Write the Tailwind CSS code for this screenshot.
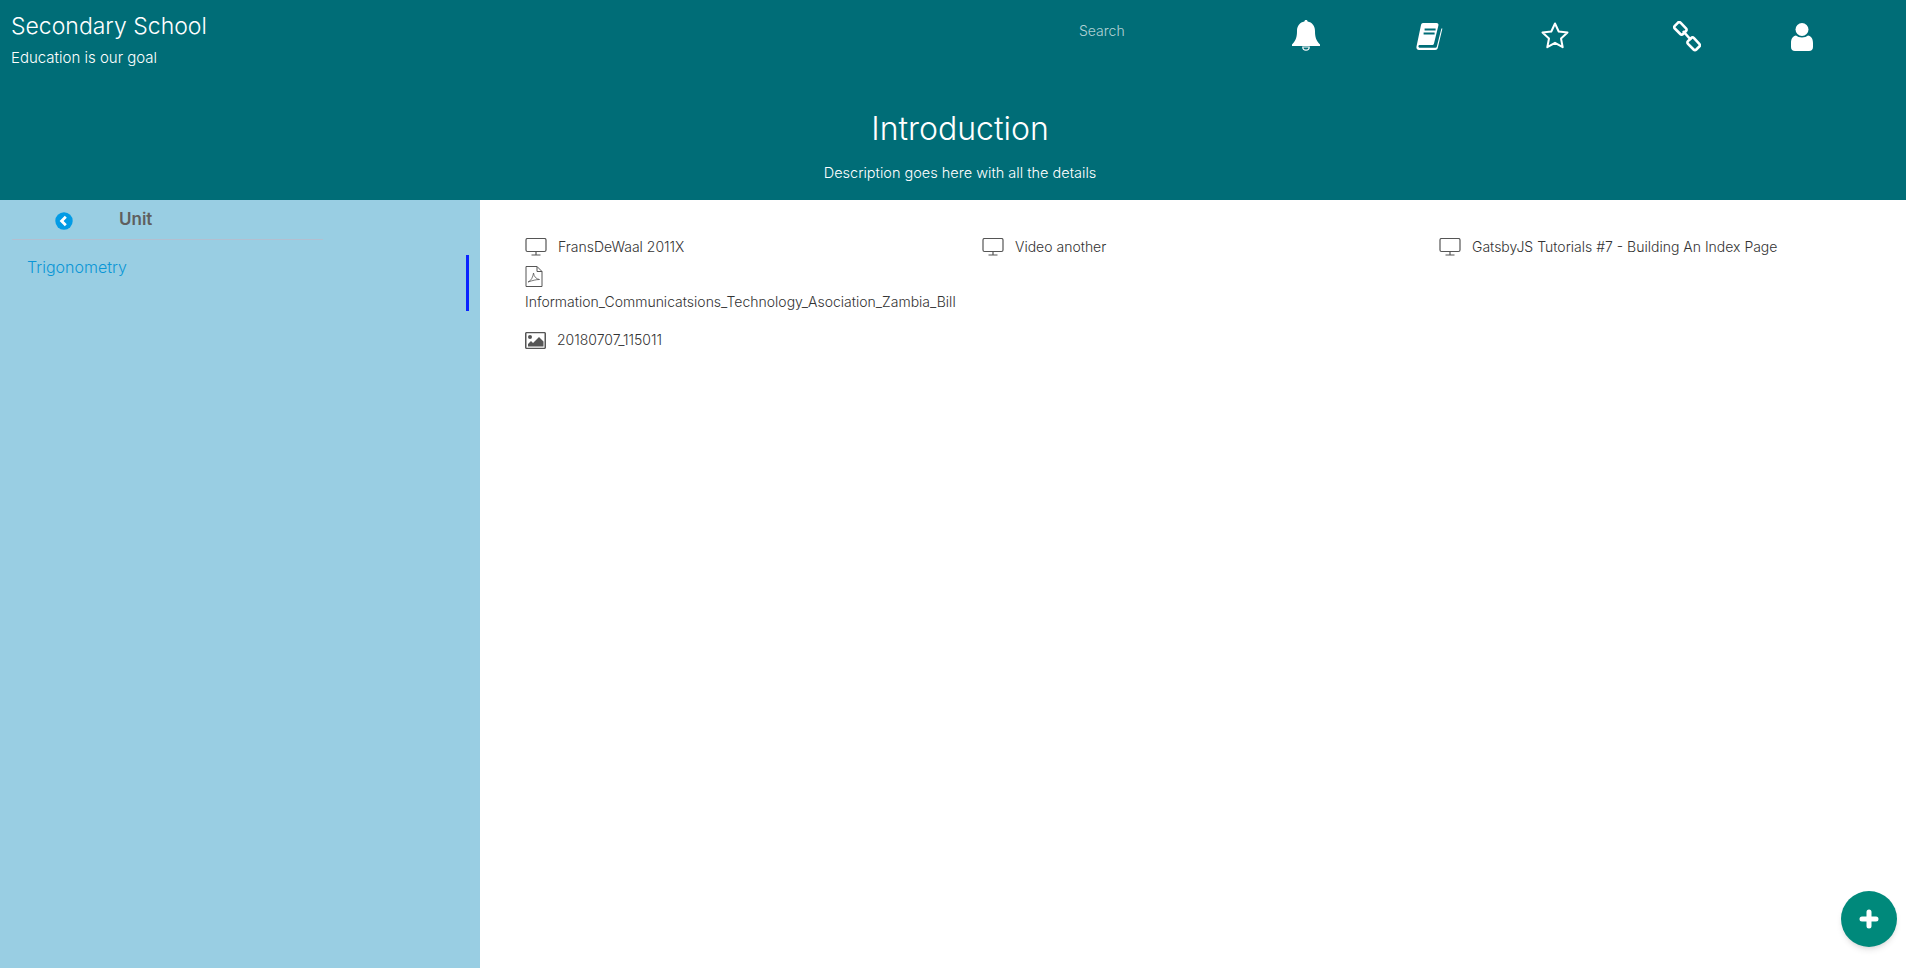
<!DOCTYPE html>
<html lang="en">
<head>
    <meta charset="UTF-8">
    <title>Secondary School</title>
    <script src="https://cdn.jsdelivr.net/npm/@tailwindcss/browser@4"></script>
</head>
<body class="relative h-[968px] overflow-hidden bg-white font-['Inter',sans-serif]">
    <!-- Header -->
    <header class="h-[200px] bg-[#006d77] text-white flex flex-col">
        <div class="h-[92px] flex">
            <div class="w-[1071px] pl-[11px] pt-[10px] font-light">
                <div class="text-[23px] leading-[32px]">Secondary School</div>
                <div class="text-[15px] leading-[20px] mt-[6px]">Education is our goal</div>
            </div>
            <div class="w-[221px] pt-[21px] text-[14px] leading-[20px] font-light text-white/70 pl-[8px]">Search</div>
            <div class="flex pt-[20px] items-start">
                <!-- bell -->
                <svg class="w-[28px] h-[33px]" viewBox="0 0 28 33" fill="#fff"><path d="M14 0c1 0 1.6.7 1.6 1.6 4.6.8 7.400 4.400 7.400 9.400 0 6 1 9.500 5 13.500v1.500H0v-1.500c4-4 5-7.500 5-13.500 0-5 2.800-8.600 7.400-9.400C12.400.7 13 0 14 0z"/><path d="M10.800 27h6.400a3.200 3.200 0 0 1-6.400 0z" fill="none" stroke="#fff" stroke-width="1.200"/></svg>
                <!-- book -->
                <svg class="w-[28px] h-[28px] ml-[96px] mt-[3px]" viewBox="0 0 28 28" fill="none" stroke="#fff"><path fill="#fff" stroke="none" d="M7 0h13.500C22 0 22.800 1 22.400 2.400L18 20.500c-.3 1.200-1 1.500-2.200 1.500H3.500c-1.500 0-1.500 2.800.5 2.800h15.500c.6 0 1-.2 1.200-.8l4.700-18.500h1l-4.600 19.300c-.3 1.400-1.200 2.200-2.600 2.200H3.800C1.500 27.500 0 25.700.5 23.500L5 2C5.300.8 6 0 7 0z"/><path stroke-width="2" stroke="#006d77" d="M8.600 6.500h11M7.600 10.500h11"/></svg>
                <!-- star outline -->
                <svg class="w-[28px] h-[29px] ml-[97px] mt-[1px]" viewBox="0 0 28 29" fill="none" stroke="#fff" stroke-width="2"><path stroke-linejoin="round" d="M14 2.500l3.700 8 8.800 1-6.500 6 1.700 8.700L14 21.800l-7.700 4.400L8 17.500l-6.500-6 8.800-1z"/></svg>
                <!-- chain link -->
                <svg class="w-[28px] h-[31px] ml-[104px] mt-[1px]" viewBox="0 0 28 31" fill="none" stroke="#fff" stroke-width="2.600" stroke-linejoin="round"><path d="M7.500 1.700l5.500 5.600c.8.800.8 1.900 0 2.700l-3 3c-.8.800-1.900.8-2.700 0L1.800 7.500c-.8-.8-.8-1.900 0-2.700l3-3c.8-.8 1.900-.8 2.700-.100z"/><path d="M21 17.200l5.300 5.600c.8.800.8 1.900 0 2.700l-3 3c-.8.800-1.900.8-2.700 0L15 22.900c-.8-.8-.8-1.900 0-2.700l3-3c.8-.8 2.200-.8 3 0z"/><path d="M10 10l8 9"/></svg>
                <!-- user -->
                <svg class="w-[22px] h-[28px] ml-[90px] mt-[3px]" viewBox="0 0 22 28" fill="#fff"><circle cx="11" cy="6.500" r="6.500"/><path d="M5 12.500c1.500 1.300 3.600 2 6 2s4.500-.7 6-2c3 .6 5 3 5 7.500v4c0 2.500-1.500 4-4 4H4c-2.500 0-4-1.500-4-4v-4c0-4.500 2-6.900 5-7.500z"/></svg>
            </div>
        </div>
        <div class="text-center pl-[14px] pt-[17px]">
            <div class="text-[32px] leading-[40px] font-light">Introduction</div>
            <div class="text-[14.500px] leading-[20px] mt-[14px] font-light">Description goes here with all the details</div>
        </div>
    </header>
    <div class="flex h-[768px]">
        <aside class="w-[480px] bg-[#99cee3]">
            <div class="relative h-[40px] ml-[12px] w-[311px] border-b border-[#b3bfd0] flex items-center pl-[43px]">
                <svg class="w-[18px] h-[18px] mt-[2px]" viewBox="0 0 18 18"><circle cx="9" cy="9" r="8.700" fill="#039be5"/><path d="M10.800 4.800L6.600 9l4.200 4.200" fill="none" stroke="#fff" stroke-width="2.800"/></svg>
                <span class="ml-[46px] font-semibold text-[17px] text-[#5f5f5f]">Unit</span>
            </div>
            <div class="mt-[15px] mr-[11px] h-[56px] border-r-[3px] border-[#0a24ff] pl-[27px] text-[16px] text-[#0a96d6] leading-[24px] font-light">Trigonometry</div>
        </aside>
        <main class="flex-1 pl-[45px] pr-[10px] pt-[37px] text-[14px] leading-[20px] font-light text-[#333]">
            <div class="grid grid-cols-3">
                <div class="flex items-center">
                    <svg class="w-[22px] h-[18px] text-[#555] mr-[11px]" viewBox="0 0 22 18" fill="none" stroke="currentColor"><rect x="1" y=".5" width="20" height="13" rx="1.500" stroke-width="1.200"/><path d="M11 14v3M6.500 17h9" stroke-width="1.200"/></svg>
                    <span>FransDeWaal 2011X</span>
                </div>
                <div class="flex items-center">
                    <svg class="w-[22px] h-[18px] text-[#555] mr-[11px]" viewBox="0 0 22 18" fill="none" stroke="currentColor"><rect x="1" y=".5" width="20" height="13" rx="1.500" stroke-width="1.200"/><path d="M11 14v3M6.500 17h9" stroke-width="1.200"/></svg>
                    <span>Video another</span>
                </div>
                <div class="flex items-center">
                    <svg class="w-[22px] h-[18px] text-[#555] mr-[11px]" viewBox="0 0 22 18" fill="none" stroke="currentColor"><rect x="1" y=".5" width="20" height="13" rx="1.500" stroke-width="1.200"/><path d="M11 14v3M6.500 17h9" stroke-width="1.200"/></svg>
                    <span>GatsbyJS Tutorials #7 - Building An Index Page</span>
                </div>
            </div>
            <div class="mt-[9px]">
                <svg class="block w-[18px] h-[21px] text-[#555]" viewBox="0 0 18 21" fill="none" stroke="currentColor" stroke-width="1"><path d="M1 .5h11l5 5v15H1z"/><path d="M12 .5v5h5"/><path d="M3 16c3-1 5-5 5.500-9 .5 4 3 6 6 6.500-3.500 0-7 1-11.500 2.500z" stroke-width=".8"/></svg>
                <div class="mt-[5px]">Information_Communicatsions_Technology_Asociation_Zambia_Bill</div>
            </div>
            <div class="flex items-center mt-[18px]">
                <svg class="w-[21px] h-[17px] text-[#555] mr-[11px]" viewBox="0 0 21 17" fill="currentColor"><path fill-rule="evenodd" d="M1.500 0h18C20.300 0 21 .7 21 1.500v14c0 .8-.7 1.500-1.500 1.500h-18C.7 17 0 16.300 0 15.500v-14C0 .7.700 0 1.500 0zM1.500 1.300v14.400h18V1.300z"/><circle cx="5" cy="5" r="2"/><path d="M3 14.500v-2.500l3-3 2 2 6-6 4.500 4.500v5z"/></svg>
                <span>20180707_115011</span>
            </div>
        </main>
    </div>
    <!-- add button -->
    <button class="absolute left-[1841px] top-[891px] w-[56px] h-[56px] rounded-full bg-[#00897b] shadow-md flex items-center justify-center">
        <svg class="w-[20px] h-[20px]" viewBox="0 0 20 20" fill="none" stroke="#fff" stroke-width="5" stroke-linecap="round"><path d="M10 3v14M3 10h14"/></svg>
    </button>
</body>
</html>
